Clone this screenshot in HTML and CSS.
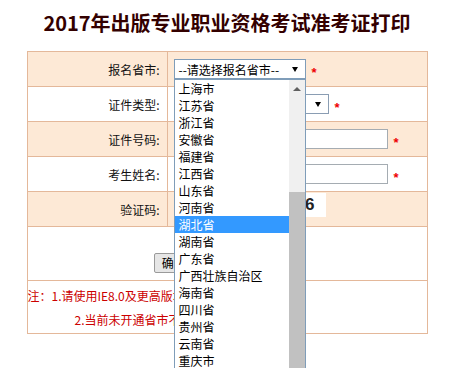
FILE: index.html
```html
<!DOCTYPE html>
<html>
<head>
  <meta charset="UTF-8">
  <title>准考证打印</title>
  <link rel="stylesheet" href="styles.css">
</head>
<body>

<h1 class="title">2017年出版专业职业资格考试准考证打印</h1>

<table class="form">
  <tr class="shade">
    <th>报名省市:</th>
    <td>
      <div class="field">
        <div class="dropdown">
          <div class="select province">--请选择报名省市--<i class="caret"></i></div>
          <div class="options">
            <ul>
              <li>上海市</li>
              <li>江苏省</li>
              <li>浙江省</li>
              <li>安徽省</li>
              <li>福建省</li>
              <li>江西省</li>
              <li>山东省</li>
              <li>河南省</li>
              <li class="active">湖北省</li>
              <li>湖南省</li>
              <li>广东省</li>
              <li>广西壮族自治区</li>
              <li>海南省</li>
              <li>四川省</li>
              <li>贵州省</li>
              <li>云南省</li>
              <li>重庆市</li>
            </ul>
            <div class="scrollbar">
              <span class="up"><i></i></span>
              <span class="track"></span>
              <span class="thumb"></span>
            </div>
          </div>
        </div>
        <span class="req">*</span>
      </div>
    </td>
  </tr>
  <tr>
    <th>证件类型:</th>
    <td>
      <div class="field">
        <div class="select idtype">身份证<i class="caret"></i></div>
        <span class="req">*</span>
      </div>
    </td>
  </tr>
  <tr class="shade">
    <th>证件号码:</th>
    <td>
      <div class="field">
        <input type="text" class="text">
        <span class="req">*</span>
      </div>
    </td>
  </tr>
  <tr>
    <th>考生姓名:</th>
    <td>
      <div class="field">
        <input type="text" class="text">
        <span class="req">*</span>
      </div>
    </td>
  </tr>
  <tr class="shade">
    <th>验证码:</th>
    <td>
      <div class="field">
        <input type="text" class="code">
        <span class="captcha">2 9 0 6</span>
      </div>
    </td>
  </tr>
  <tr>
    <td colspan="2" class="actions">
      <button>确定打印</button>
      <button>返回首页</button>
    </td>
  </tr>
  <tr>
    <td colspan="2" class="notes">
      <p>注：1.请使用IE8.0及更高版本浏览器</p>
      <p class="indent">2.当前未开通省市不能打印</p>
    </td>
  </tr>
</table>

</body>
</html>
```

FILE: styles.css
```css
html {
  overflow: hidden;
}
body {
  margin: 0;
  padding: 0;
  min-height: 100vh;
  font-family: "Noto Sans CJK SC", sans-serif;
  background: #fff;
}
.title {
  margin: 9px 0 14px;
  font-size: 20px;
  line-height: 28px;
  font-weight: bold;
  text-align: center;
  color: #300;
}
.form {
  width: 401px;
  margin: 0 auto;
  border-collapse: separate;
  border-spacing: 0;
  border-top: 1px solid #e4b89a;
  border-left: 1px solid #e4b89a;
  table-layout: fixed;
  font-size: 12px;
}
.form th, .form td {
  box-sizing: border-box;
  height: 35px;
  padding: 0;
  border-right: 1px solid #e4b89a;
  border-bottom: 1px solid #e4b89a;
}
.form th {
  width: 140px;
  padding-right: 7px;
  text-align: right;
  font-weight: normal;
  color: #111;
}
.form td {
  padding-left: 6px;
}
.shade th, .shade td {
  background: #fde9d6;
}
.field {
  display: flex;
  align-items: center;
  height: 34px;
}
.dropdown {
  position: relative;
}
.select {
  box-sizing: border-box;
  display: flex;
  align-items: center;
  height: 20px;
  padding-left: 4px;
  border: 1px solid #7f9db9;
  background: #fff;
  color: #000;
}
.province {
  width: 132px;
}
.idtype {
  width: 155px;
  border-color: #8a9db3;
}
.caret {
  margin-left: auto;
  margin-right: 7px;
  border-left: 3px solid transparent;
  border-right: 3px solid transparent;
  border-top: 5px solid #000;
}
.options {
  position: absolute;
  top: 100%;
  left: 0;
  z-index: 10;
  box-sizing: border-box;
  width: 132px;
  height: 290px;
  display: flex;
  border: 1px solid #7f9db9;
  border-bottom: none;
  background: #fff;
}
.options ul {
  flex: 1;
  margin: 0;
  padding: 0;
  list-style: none;
}
.options li {
  height: 17px;
  line-height: 17px;
  padding-left: 4px;
  white-space: nowrap;
  color: #000;
}
.options li.active {
  background: #3399ff;
  color: #fff;
}
.scrollbar {
  width: 16px;
  display: flex;
  flex-direction: column;
  background: #f0f0f0;
}
.scrollbar .up {
  height: 17px;
  display: flex;
  align-items: center;
  justify-content: center;
}
.scrollbar .up i {
  border-left: 4px solid transparent;
  border-right: 4px solid transparent;
  border-bottom: 4px solid #606060;
}
.scrollbar .track {
  height: 95px;
}
.scrollbar .thumb {
  flex: 1;
  background: #c1c1c1;
}
.text, .code {
  box-sizing: border-box;
  height: 20px;
  margin: 0;
  padding: 0 3px;
  border: 1px solid #a5acb2;
  background: #fff;
}
.text {
  width: 214px;
}
.code {
  width: 66px;
}
.req {
  margin-left: 6px;
  margin-top: 7px;
  font-family: "Liberation Sans", sans-serif;
  font-size: 13px;
  line-height: 13px;
  font-weight: bold;
  color: #e00;
}
.captcha {
  box-sizing: border-box;
  width: 80px;
  height: 24px;
  margin-left: 6px;
  margin-bottom: 9px;
  padding-right: 11px;
  text-align: right;
  font-family: "Liberation Sans", sans-serif;
  font-size: 17px;
  line-height: 24px;
  font-weight: bold;
  color: #222;
  background: #fff;
}
.form td.actions {
  height: 54px;
  padding: 26px 0 0;
  vertical-align: top;
  text-align: center;
}
.actions button {
  height: 20px;
  margin: 0 8px;
  padding: 0 7px;
  font-family: "Noto Sans CJK SC", sans-serif;
  font-size: 12px;
  line-height: 18px;
  border: 1px solid #9a9a9a;
  border-radius: 2px;
  background: #e6e6e6;
  color: #000;
}
.form td.notes {
  height: 53px;
  padding: 3px 0 0;
  vertical-align: top;
  color: #cc0000;
  line-height: 24px;
}
.notes p {
  margin: 0;
}
.notes .indent {
  padding-left: 47px;
}
```
